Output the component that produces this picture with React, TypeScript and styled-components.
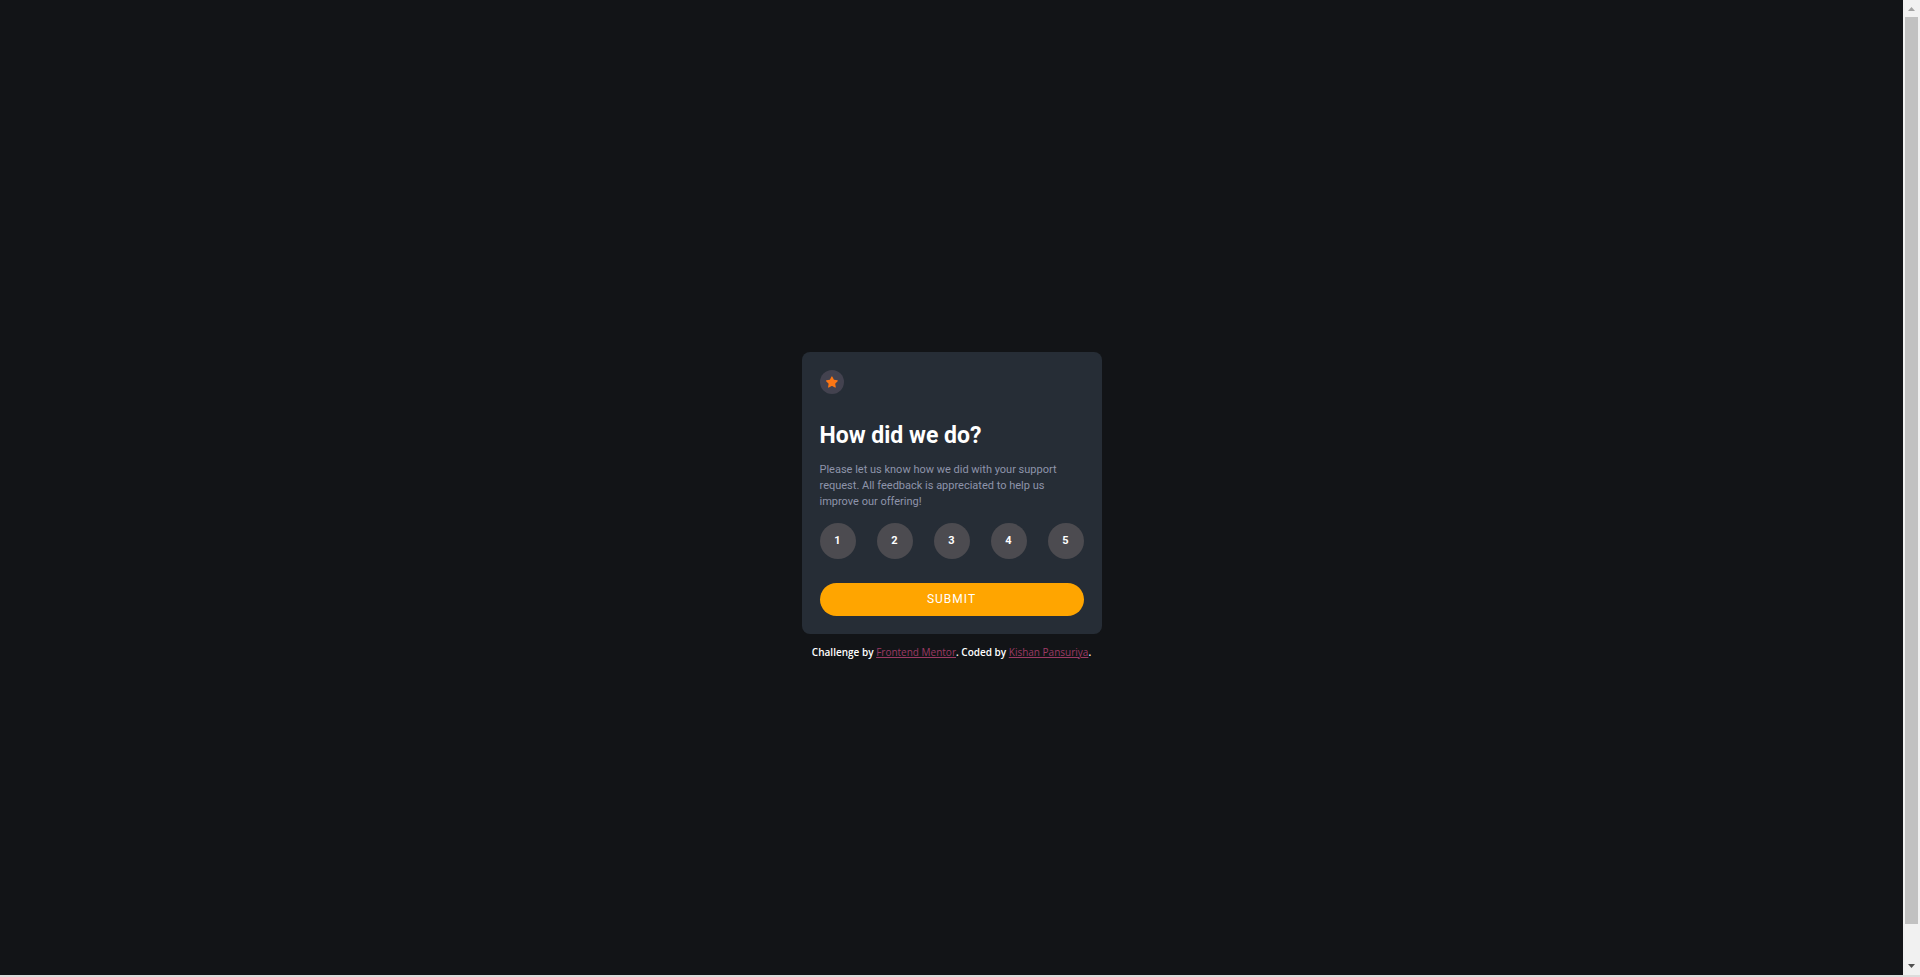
import React, { useState } from "react";
import styled, { createGlobalStyle } from "styled-components";

const GlobalStyle = createGlobalStyle`
  *, *::before, *::after {
    box-sizing: border-box;
  }
  body {
    margin: 0;
    background: #121417;
    font-family: Roboto, "Open Sans", sans-serif;
    overflow: hidden;
  }
`;

const Window = styled.div`
  display: grid;
  grid-template-columns: minmax(0, 1fr) 17px;
  min-height: 100vh;
  border-bottom: 2px solid #dcdcdc;
`;

const Page = styled.div`
  display: flex;
  flex-direction: column;
  align-items: center;
  justify-content: center;
  gap: 11px;
  padding-top: 35px;
`;

const Card = styled.main`
  display: flex;
  flex-direction: column;
  width: 300px;
  max-width: 100%;
  padding: 18px;
  border-radius: 8px;
  background: #262d36;
`;

const StarBadge = styled.span`
  display: flex;
  align-items: center;
  justify-content: center;
  width: 24px;
  height: 24px;
  border-radius: 50%;
  background: #43424f;
`;

const Title = styled.h1`
  margin: 26px 0 10px;
  color: #fff;
  font-size: 23px;
  font-weight: 700;
  line-height: 32px;
`;

const Description = styled.p`
  margin: 0;
  color: #8e94aa;
  font-size: 11px;
  line-height: 16px;
`;

const RatingRow = styled.div`
  display: flex;
  justify-content: space-between;
  margin: 13px 0 24px;
`;

const RatingButton = styled.button<{ $selected: boolean }>`
  width: 36px;
  height: 36px;
  padding: 0;
  border: 0;
  border-radius: 50%;
  background: ${(p) => (p.$selected ? "#ffa500" : "#4c4b50")};
  color: #fff;
  font-family: inherit;
  font-size: 11px;
  font-weight: 700;
  cursor: pointer;
`;

const SubmitButton = styled.button`
  height: 33px;
  padding: 0;
  border: 0;
  border-radius: 17px;
  background: #ffa500;
  color: #fff;
  font-family: inherit;
  font-size: 12px;
  letter-spacing: 1px;
  text-transform: uppercase;
  cursor: pointer;
`;

const Attribution = styled.footer`
  color: #fff;
  font-family: "Open Sans", sans-serif;
  font-size: 10px;
  font-weight: 600;
  line-height: 14px;
`;

const AttributionLink = styled.a`
  color: #9c3a64;
  font-weight: 400;
  text-decoration: underline;
`;

const ScrollTrack = styled.div`
  display: grid;
  grid-template-rows: 17px minmax(0, 907fr) minmax(0, 34fr) 17px;
  background: #f1f1f1;
`;

const ScrollThumb = styled.div`
  margin: 0 2px;
  background: #c1c1c1;
`;

const ScrollArrow = styled.svg<{ $row: number }>`
  display: block;
  width: 17px;
  height: 17px;
  grid-row: ${(p) => p.$row};
`;

const ratings = [1, 2, 3, 4, 5];

export default function App() {
  const [selected, setSelected] = useState<number | null>(null);

  return (
    <>
      <GlobalStyle />
      <Window>
        <Page>
          <Card>
            <StarBadge>
              <svg width="12" height="12" viewBox="0 0 17 16" aria-hidden="true">
                <path
                  d="m9.067.43 1.99 4.031c.112.228.33.386.58.422l4.45.647a.772.772 0 0 1 .427 1.316l-3.22 3.138a.773.773 0 0 0-.222.683l.76 4.431a.772.772 0 0 1-1.12.813l-3.98-2.092a.773.773 0 0 0-.718 0l-3.98 2.092a.772.772 0 0 1-1.119-.813l.76-4.431a.77.77 0 0 0-.222-.683L.233 6.846A.772.772 0 0 1 .661 5.53l4.449-.647a.772.772 0 0 0 .58-.422L7.68.43a.774.774 0 0 1 1.387 0Z"
                  fill="#fc7614"
                />
              </svg>
            </StarBadge>
            <Title>How did we do?</Title>
            <Description>
              Please let us know how we did with your support request. All
              feedback is appreciated to help us improve our offering!
            </Description>
            <RatingRow role="group" aria-label="Rating">
              {ratings.map((n) => (
                <RatingButton
                  key={n}
                  type="button"
                  $selected={selected === n}
                  aria-pressed={selected === n}
                  onClick={() => setSelected(n)}
                >
                  {n}
                </RatingButton>
              ))}
            </RatingRow>
            <SubmitButton type="button">Submit</SubmitButton>
          </Card>
          <Attribution>
            Challenge by{" "}
            <AttributionLink href="#mentor">Frontend Mentor</AttributionLink>.
            Coded by{" "}
            <AttributionLink href="#author">Kishan Pansuriya</AttributionLink>.
          </Attribution>
        </Page>
        <ScrollTrack aria-hidden="true">
          <ScrollArrow $row={1} viewBox="0 0 17 17">
            <path d="M5 11h7L8.500 7z" fill="#a3a3a3" />
          </ScrollArrow>
          <ScrollThumb />
          <ScrollArrow $row={4} viewBox="0 0 17 17">
            <path d="M5 6h7L8.500 10z" fill="#505050" />
          </ScrollArrow>
        </ScrollTrack>
      </Window>
    </>
  );
}
